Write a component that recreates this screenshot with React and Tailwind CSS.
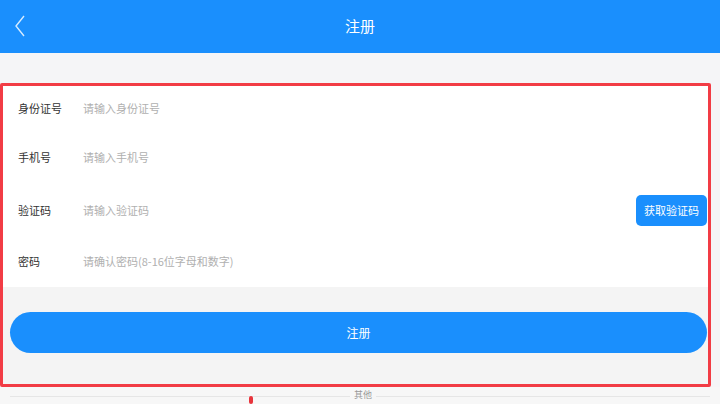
import React from "react";

const fields = [
  { label: "身份证号", placeholder: "请输入身份证号", h: "h-[45px]" },
  { label: "手机号", placeholder: "请输入手机号", h: "h-[53px]" },
  { label: "验证码", placeholder: "请输入验证码", h: "h-[52px]", code: true },
  { label: "密码", placeholder: "请确认密码(8-16位字母和数字)", h: "h-[51px]" },
];

const App = () => {
  return (
    <div className="w-[720px] h-[404px] overflow-hidden bg-[#f5f5f7] font-['Noto_Sans_CJK_SC','Noto_Sans',sans-serif]">
      <div className="relative h-[53px] bg-[#1a8ffd] flex items-center justify-center">
        <svg
          className="absolute left-[14px] top-[15px]"
          width="12"
          height="22"
          viewBox="0 0 12 22"
          fill="none"
        >
          <path d="M10 1 L2 11 L10 21" stroke="#d6ebff" strokeWidth="1.4" />
        </svg>
        <span className="text-[15px] text-white">注册</span>
      </div>

      <div className="h-[30px]" />

      <div className="w-[711px] border-[3px] border-[#f23c45] rounded-[2px]">
        <div className="bg-white">
          {fields.map((f) => (
            <div key={f.label} className={`${f.h} flex items-center`}>
              <span className="w-[80px] pl-[15px] text-[11px] text-[#333]">
                {f.label}
              </span>
              <span className="flex-1 text-[11px] text-[#b0b0b0]">
                {f.placeholder}
              </span>
              {f.code && (
                <button
                  type="button"
                  className="mr-[1px] w-[71px] h-[31px] rounded-[5px] bg-[#1a8ffd] text-[11px] text-white"
                >
                  获取验证码
                </button>
              )}
            </div>
          ))}
        </div>
        <div className="bg-[#f4f4f4] pt-[25px] pb-[31px] pl-[7px] pr-[1px]">
          <button
            type="button"
            className="w-full h-[41px] rounded-full bg-[#1a8ffd] text-[12px] text-white"
          >
            注册
          </button>
        </div>
      </div>

      <div className="relative h-[20px] bg-[#f7f7f7] px-[10px] pt-[9px]">
        <div className="h-[1px] bg-[#e6e6e6]" />
        <span className="absolute left-[249px] top-[9px] w-[4px] h-[8px] rounded-full bg-[#e8343c]" />
        <span className="absolute left-[350px] top-[2px] px-[4px] bg-[#f7f7f7] text-[9px] leading-[12px] text-[#999]">
          其他
        </span>
      </div>
    </div>
  );
};

export default App;
